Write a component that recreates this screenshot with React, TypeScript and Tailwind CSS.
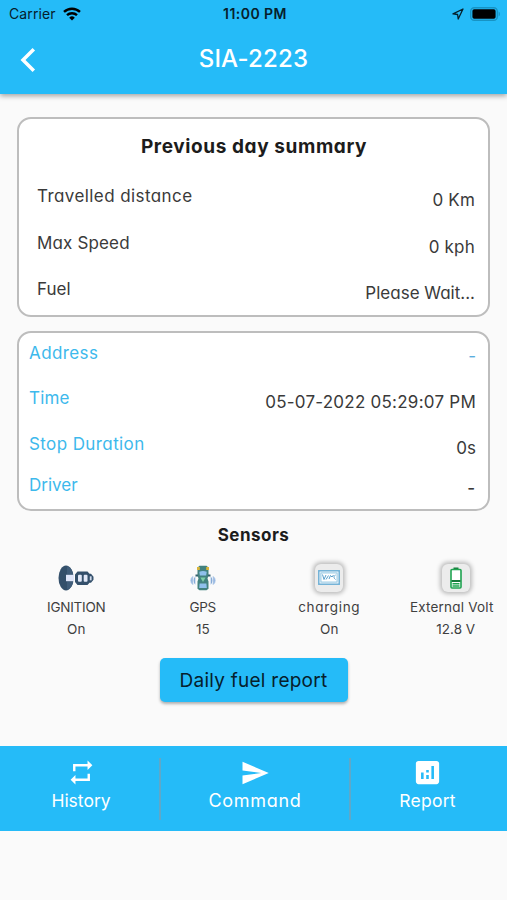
import type { ReactNode } from 'react'
import clsx from 'clsx'
import { MdAnalytics, MdRepeat, MdSend } from 'react-icons/md'

function StatusBar() {
  return (
    <div className="grid h-[27px] grid-cols-3 items-center pr-[6px] pl-[9px] text-[14px] text-[#06202c]">
      <div className="flex items-center gap-[7px]">
        <span className="tracking-[0.1px]">Carrier</span>
        <svg width="18" height="14" viewBox="0 0 18 14" fill="none" stroke="#000" strokeWidth="2.4">
          <path d="M1 4.9a11.6 11.6 0 0 1 16 0" />
          <path d="M4 8.2a7.2 7.2 0 0 1 10 0" />
          <path d="M9 13.6 6.2 10.7a4 4 0 0 1 5.6 0z" fill="#000" stroke="none" />
        </svg>
      </div>
      <span className="text-center font-semibold tracking-[0.45px]">11:00 PM</span>
      <div className="flex items-center justify-end gap-[6px]">
        <svg width="12" height="12" viewBox="0 0 12 12" fill="none" stroke="#06202c" strokeWidth="1.3" strokeLinejoin="round">
          <path d="M11 1 1 5.9l4.6.6.6 4.5z" />
        </svg>
        <svg width="31" height="14" viewBox="0 0 31 14">
          <rect x="0.7" y="0.7" width="26.6" height="12.6" rx="3.6" fill="none" stroke="#1793c4" strokeWidth="1.4" />
          <rect x="2.4" y="2.3" width="23.2" height="9.4" rx="1.8" fill="#000" />
          <path d="M28.6 4.6a2.8 2.8 0 0 1 0 4.8z" fill="#1793c4" />
        </svg>
      </div>
    </div>
  )
}

function Header() {
  return (
    <header className="h-[94px] bg-[#25bbf8] shadow-[0_2px_5px_rgba(0,0,0,0.35)]">
      <StatusBar />
      <div className="grid h-[62px] grid-cols-3 items-center">
        <svg className="mt-[3px] ml-[20px]" width="16" height="26" viewBox="0 0 16 26" fill="none" stroke="#fff" strokeWidth="3.5">
          <path d="M13.8 2.2 3 13l10.8 10.8" />
        </svg>
        <h1 className="pt-px text-center text-[24px] font-medium tracking-[0.2px] text-white">SIA-2223</h1>
      </div>
    </header>
  )
}

function Card({ className, children }: { className?: string; children: ReactNode }) {
  return (
    <section className={clsx('rounded-[14px] border-2 border-[#bdbdbd] bg-white', className)}>
      {children}
    </section>
  )
}

type RowProps = {
  label: string
  value: string
  className?: string
  labelClass?: string
  valueClass?: string
}

function Row({ label, value, className, labelClass, valueClass = 'pt-1' }: RowProps) {
  return (
    <div className={clsx('flex items-start justify-between text-[17px] leading-6 text-[#3a3a3a]', className)}>
      <span className={labelClass}>{label}</span>
      <span className={valueClass}>{value}</span>
    </div>
  )
}

function IgnitionIcon() {
  return (
    <svg width="36" height="26" viewBox="0 0 36 26">
      <ellipse cx="8" cy="13" rx="7.5" ry="12.5" fill="#34506b" />
      <path d="M9 1.2C13 2.5 15 6 15.3 9.8H9z M9 16.2h6.3C15 20 13 23.5 9 24.8z" fill="#405d7a" />
      <path d="M8 9.8h8v6.4H8z" fill="#dfe6fa" />
      <path d="M19.5 6.5h10l2 2.3h1.5l2.5 3v3l-2.5 3h-1.5l-2 2.3h-10l-2.5-3V9.5z" fill="#34506b" />
      <rect x="20" y="9.7" width="3.8" height="7" rx="1" fill="#e2e9f8" />
      <rect x="25.7" y="9.7" width="3.8" height="7" rx="1" fill="#e2e9f8" />
      <rect x="31.8" y="11.3" width="1.8" height="4" fill="#cfdaeb" />
    </svg>
  )
}

function GpsIcon() {
  return (
    <svg width="26" height="26" viewBox="0 0 26 26">
      <path d="M7.5 2.5 9.5.8h7l2 1.7v8l-1 3 1 3v7.3l-2 1.5h-7l-2-1.5v-7.3l1-3-1-3z" fill="#42827f" />
      <path d="M7 2h2.8v3H7zM16.2 2H19v3h-2.8z" fill="#d9b53a" />
      <path d="M5.5 9.5H8v2H5.5zM18 9.5h2.5v2H18z" fill="#34606e" />
      <path d="M9.3 6.8Q13 5 16.7 6.8l-.5 3.6H9.8z" fill="#8fc0ec" />
      <path d="M10.4 12.5h5.2L13 17z" fill="#7fd0a8" />
      <path d="M9.6 18.5h6.8l.4 4.5H9.2z" fill="#8fc0ec" />
      <path d="M5.3 11.3v8.4a6 6 0 0 1 0-8.4zM20.7 11.3v8.4a6 6 0 0 0 0-8.4z" fill="#86abd8" />
      <path d="M2.8 11.5v8a5 5 0 0 1 0-8zM23.2 11.5v8a5 5 0 0 0 0-8z" fill="#96b7e0" stroke="#a3c0e4" strokeWidth="0.8" />
    </svg>
  )
}

function Tile({ children }: { children: ReactNode }) {
  return (
    <div className="flex h-[28px] w-[28px] items-center justify-center rounded-[6px] bg-[#ececec] shadow-[0_0_4px_2px_rgba(0,0,0,0.25)]">
      {children}
    </div>
  )
}

function ChargingIcon() {
  return (
    <Tile>
      <svg width="22" height="15" viewBox="0 0 22 15" fill="none">
        <rect x="0.8" y="0.8" width="20.4" height="13.4" fill="#fff" stroke="#6fb0d6" strokeWidth="1.5" />
        <rect x="2.9" y="2.9" width="16.2" height="9.2" stroke="#8cc3e2" />
        <path d="m4.5 4.5 1.5 5 2-4.500M8 9.500l2.500-4M11 9l1.500-3.500L14 7l1.500-2M17.500 5c-2 1-2 3 0 4.500" stroke="#5a9fcb" />
      </svg>
    </Tile>
  )
}

function BatteryIcon() {
  return (
    <Tile>
      <svg width="12" height="22" viewBox="0 0 12 22" fill="none">
        <path d="M3.5 0.5h5v2h-5z" fill="#187a3c" />
        <rect x="1" y="2.5" width="10" height="18.5" rx="1" fill="#fff" stroke="#1fa350" strokeWidth="1.6" />
        <path d="M1.5 14h9" stroke="#187a3c" strokeWidth="2" />
        <path d="M2.5 16.8h7M2.5 19h7" stroke="#1fa350" strokeWidth="1.4" />
      </svg>
    </Tile>
  )
}

const sensors = [
  { name: 'IGNITION', value: 'On', icon: <IgnitionIcon />, nameClass: 'tracking-[-0.25px]' },
  { name: 'GPS', value: '15', icon: <GpsIcon />, nameClass: 'tracking-[-0.3px]' },
  { name: 'charging', value: 'On', icon: <ChargingIcon />, nameClass: 'tracking-[0.7px]' },
  { name: 'External Volt', value: '12.8 V', icon: <BatteryIcon />, nameClass: 'pr-2 tracking-[0.2px]' },
]

function Sensors() {
  return (
    <section className="pt-3">
      <h2 className="text-center text-[17px] leading-6 font-bold tracking-[0.5px] text-[#1c1c1c]">Sensors</h2>
      <div className="mr-[12px] ml-[13px] flex overflow-hidden pt-2">
        {sensors.map((s) => (
          <div
            key={s.name}
            className="flex w-[126.5px] shrink-0 flex-col items-center text-[13.5px] leading-[22px] whitespace-nowrap text-[#3f3f3f]"
          >
            <div className="flex h-[41px] items-center pt-1">{s.icon}</div>
            <span className={s.nameClass}>{s.name}</span>
            <span>{s.value}</span>
          </div>
        ))}
      </div>
    </section>
  )
}

type NavItemProps = {
  icon: ReactNode
  label: string
  className?: string
  labelClass?: string
}

function NavItem({ icon, label, className, labelClass }: NavItemProps) {
  return (
    <button className={clsx('flex flex-col items-center pt-[13px] leading-6 text-white', className)}>
      <span className="flex h-[27px] items-center">{icon}</span>
      <span className={clsx('pt-[3px]', labelClass)}>{label}</span>
    </button>
  )
}

function BottomNav() {
  return (
    <nav className="mt-[44px] flex h-[85px] bg-[#25bbf8]">
      <NavItem icon={<MdRepeat size={29} />} label="History" className="w-[159px] pl-[3px]" labelClass="text-[17.5px]" />
      <div className="mt-3 h-[62px] w-[2px] bg-[#5fa8c8]" />
      <NavItem icon={<MdSend size={30} />} label="Command" className="w-[188px]" labelClass="text-[18px] tracking-[0.7px]" />
      <div className="mt-3 h-[62px] w-[2px] bg-[#5fa8c8]" />
      <NavItem icon={<MdAnalytics size={31} />} label="Report" className="w-[153px]" labelClass="text-[17.5px] tracking-[0.25px]" />
    </nav>
  )
}

export default function App() {
  return (
    <div className="h-[900px] overflow-hidden bg-[#fafafa] font-['Inter','Liberation_Sans',sans-serif]">
      <Header />
      <main className="[font-feature-settings:'cv11']">
        <Card className="mx-[17px] mt-[23px] h-[200px] pt-[14px] pr-[13px] pl-[18px]">
          <h2 className="pr-[4px] text-center text-[19px] leading-7 font-bold tracking-[0.6px] text-[#1c1c1c]">
            Previous day summary
          </h2>
          <div className="flex flex-col gap-[18.5px] pt-[23px]">
            <Row label="Travelled distance" value="0 Km" labelClass="tracking-[0.42px]" valueClass="pt-1 tracking-[0.2px]" />
            <Row label="Max Speed" value="0 kph" labelClass="tracking-[0.15px]" valueClass="pt-1 tracking-[0.2px]" />
            <Row label="Fuel" value="Please Wait..." />
          </div>
        </Card>

        <Card className="mx-[17px] mt-[14px] h-[180px] pt-2 pr-[12px] pl-[10px]">
          <Row
            label="Address"
            value="-"
            className="h-[45px]"
            labelClass="tracking-[0.4px] text-[#3db9ec]"
            valueClass="pt-[3px] text-[#5aaede]"
          />
          <Row
            label="Time"
            value="05-07-2022 05:29:07 PM"
            className="h-[46px]"
            labelClass="tracking-[0.2px] text-[#3db9ec]"
            valueClass="pt-1 tracking-[0.24px]"
          />
          <Row
            label="Stop Duration"
            value="0s"
            className="h-[40.5px]"
            labelClass="tracking-[0.4px] text-[#3db9ec]"
          />
          <Row label="Driver" value="-" labelClass="text-[#3db9ec]" valueClass="pt-[3px] pr-px font-medium" />
        </Card>

        <Sensors />
      </main>

      <div className="flex justify-center pt-[18px]">
        <button className="h-[44px] w-[188px] rounded-[5px] bg-[#25bbf8] pt-[2px] text-[19px] tracking-[0.25px] text-[#06202c] shadow-[0_2px_3px_rgba(0,0,0,0.3)]">
          Daily fuel report
        </button>
      </div>

      <div className="[font-feature-settings:'cv11']">
        <BottomNav />
      </div>
    </div>
  )
}
